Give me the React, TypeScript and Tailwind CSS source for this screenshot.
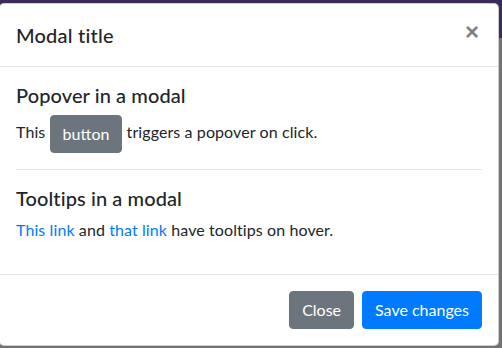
export default function App() {
  return (
    <div
      className="h-[348px] w-[502px] overflow-hidden bg-[linear-gradient(#3b2b58_38px,#737373_38px)] pt-[3px] text-[#212529]"
      style={{ fontFamily: '"Lato", "Liberation Sans", sans-serif' }}
    >
      <div className="ml-[-1px] w-[500px] rounded-[5px] border border-black/20 bg-white">
        {/* Header */}
        <div className="flex items-start justify-between border-b border-[#dee2e6] p-4">
          <h5 className="m-0 text-[20px] font-medium leading-[1.5] tracking-[0.01em]">Modal title</h5>
          <button
            className="-m-4 ml-auto p-4 pr-[19px] text-[24px] font-bold leading-none text-black opacity-50"
            style={{ fontFamily: '"Liberation Sans", sans-serif' }}
          >
            ×
          </button>
        </div>

        {/* Body */}
        <div className="p-4 tracking-[0.006em]">
          <h5 className="mb-2 text-[20px] font-medium leading-[1.2]">Popover in a modal</h5>
          <p className="mb-4 text-base leading-6">
            This{" "}
            <button className="inline-block rounded border border-[#6c757d] bg-[#6c757d] px-3 py-[6px] align-middle text-base leading-6 tracking-normal text-white">
              button
            </button>{" "}
            triggers a popover on click.
          </p>
          <hr className="my-4 border-t border-black/10" />
          <h5 className="mb-2 text-[20px] font-medium leading-[1.2]">Tooltips in a modal</h5>
          <p className="mb-4 text-base leading-6">
            <a className="text-[#007bff]">This link</a> and <a className="text-[#007bff]">that link</a> have tooltips on hover.
          </p>
        </div>

        {/* Footer */}
        <div className="flex items-center justify-end border-t border-[#dee2e6] p-3">
          <button className="m-1 rounded border border-[#6c757d] bg-[#6c757d] px-3 py-[6px] text-base leading-6 text-white">
            Close
          </button>
          <button className="m-1 rounded border border-[#007bff] bg-[#007bff] px-3 py-[6px] text-base leading-6 text-white">
            Save changes
          </button>
        </div>
      </div>
    </div>
  );
}
